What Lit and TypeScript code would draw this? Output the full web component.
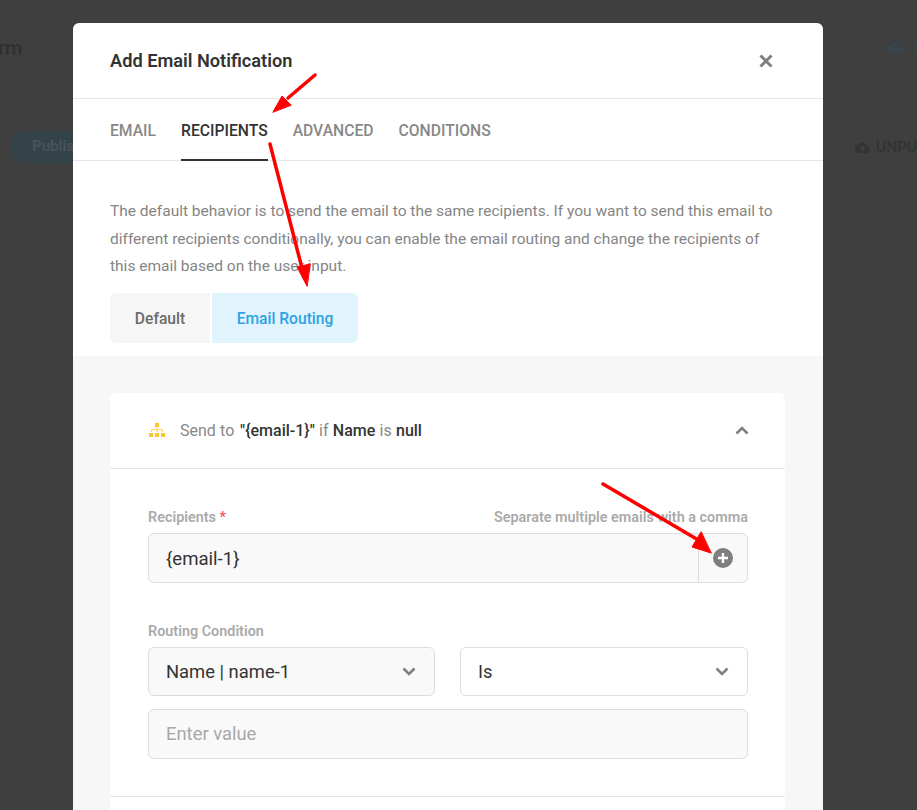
import { LitElement, html, css } from "lit";
import { customElement } from "lit/decorators.js";

const chevron = (up = false) => html`<svg class="chev" viewBox="0 0 14 9" width="14" height="9"><path d="${up ? "M1.5 7.5 7 2l5.5 5.5" : "M1.5 1.5 7 7l5.5-5.5"}" fill="none" stroke="currentColor" stroke-width="2.6"/></svg>`;
const cloud = html`<svg viewBox="0 0 16 12" width="15" height="11"><path fill="currentColor" d="M12.9 4.5A5 5 0 0 0 3.5 3.2 4.2 4.2 0 0 0 4 12h8.6a3.7 3.7 0 0 0 .3-7.5ZM9.5 7v2.5h-3V7H4.4L8 3.4 11.6 7Z"/></svg>`;

@customElement("app-root")
export class AppRoot extends LitElement {
  static styles = css`
    :host { display: block; position: relative; width: 917px; height: 810px; overflow: hidden; background: #3f3f3f; font-family: Roboto, "Liberation Sans", sans-serif; color: #333; }
    * { box-sizing: border-box; }
    .page { height: 810px; display: flex; flex-direction: column; color: #303030; }
    .top { height: 73px; border-bottom: 1px solid #414141; display: flex; justify-content: space-between; font-size: 20px; font-weight: 500; padding-top: 31px; }
    .brand { line-height: 34px; margin-left: -2px; }
    .save { width: 60px; flex: none; height: 32px; margin-right: -16px; border: 1px solid #414141; border-radius: 4px; color: #37454d; display: flex; align-items: center; gap: 11px; padding-left: 14px; font-size: 15px; overflow: hidden; }
    .save svg { flex: none; }
    .sub { flex: none; height: 36px; border-bottom: 1px solid #404040; }
    .bar { display: flex; justify-content: space-between; align-items: center; padding: 22px 0 0 10px; }
    .publish { width: 80px; height: 32px; border-radius: 16px; background: #34424a; color: #47525a; font-size: 15px; font-weight: 700; padding: 6px 0 0 22px; }
    .unpub { width: 62px; white-space: nowrap; font-size: 15.5px; font-weight: 500; display: flex; gap: 6px; align-items: center; color: #333; }
    .unpub svg { flex: none; }
    .modal { position: absolute; left: 73px; top: 23px; width: 750px; height: 787px; background: #fff; border-radius: 6px 6px 0 0; }
    .head { height: 76px; padding: 0 49px 0 37px; border-bottom: 1px solid #e6e6e6; display: flex; justify-content: space-between; align-items: center; }
    h2 { margin: 0; font-size: 18.2px; font-weight: 600; color: #333; }
    .close { display: block; color: #7f7f7f; }
    .tabs { height: 62px; padding: 0 37px; border-bottom: 1px solid #e6e6e6; display: flex; gap: 25px; align-items: stretch; }
    .tab { font-size: 15.7px; font-weight: 500; color: #888; display: flex; align-items: center; height: 62px; }
    .tab.on { color: #333; border-bottom: 2px solid #333; padding-top: 2px; }
    .intro { padding: 37px 37px 13px; }
    p { margin: 0 0 12px; font-size: 15.5px; line-height: 27.5px; color: #858585; }
    .seg { display: flex; width: max-content; height: 50px; font-size: 15.6px; font-weight: 500; }
    .seg div { display: flex; align-items: center; justify-content: center; padding-top: 2px; }
    .seg .a { width: 100px; background: #f6f6f6; color: #6b6b6b; border-radius: 6px 0 0 6px; margin-right: 2px; }
    .seg .b { width: 146px; background: #e1f4fe; color: #2ea3e3; border-radius: 0 6px 6px 0; }
    .gray { background: #f7f7f7; padding: 37px 38px 0 37px; height: 454px; }
    .card { background: #fff; border-radius: 6px 6px 0 0; height: 417px; }
    .chead { height: 76px; border-bottom: 1px solid #e6e6e6; padding: 0 36px 0 39px; display: flex; align-items: center; font-size: 16px; color: #888; }
    .chead b { font-weight: 500; color: #333; }
    .chead b.q { margin-left: 1.5px; }
    .chead svg.org { margin-right: 15px; }
    .chead .t { flex: 1; word-spacing: 0.3px; }
    .chead .chev { color: #7f7f7f; }
    .cbody { padding: 38px 37px 0 38px; height: 328px; border-bottom: 1px solid #e6e6e6; }
    .labels { display: flex; justify-content: space-between; font-size: 14.4px; font-weight: 600; color: #aaa; height: 26px; padding-top: 2px; line-height: 17px; }
    .labels i { color: #f05a5a; font-style: normal; }
    .field { height: 50px; border: 1px solid #ddd; border-radius: 6px; background: #f9f9f9; display: flex; align-items: center; font-size: 18.4px; color: #333; padding-left: 17px; }
    .field .v { flex: 1; font-size: 18.6px; padding-top: 2px; }
    .plus { width: 49px; height: 48px; border-left: 1px solid #ddd; display: flex; align-items: center; justify-content: center; }
    .lab2 { font-size: 14.4px; font-weight: 600; color: #aaa; margin-top: 40px; height: 24px; line-height: 17px; }
    .row { display: flex; gap: 25px; }
    .sel { width: 287px; flex: none; height: 49px; justify-content: space-between; padding-right: 18px; }
    .sel .chev { color: #7f7f7f; }
    .sel.w { background: #fff; flex: 1; }
    .ph { margin-top: 13px; color: #a8a8a8; height: 50px; }
    .arrows { position: absolute; left: 0; top: 0; pointer-events: none; }
  `;

  render() {
    return html`
      <div class="page">
        <div class="top"><span class="brand">rm</span><div class="save">${cloud}<span>Save</span></div></div>
        <div class="sub"></div>
        <div class="bar"><div class="publish">Publish</div><div class="unpub">${cloud}<span>UNPUBLISHED</span></div></div>
      </div>
      <div class="modal">
        <div class="head">
          <h2>Add Email Notification</h2>
          <svg class="close" viewBox="0 0 16 16" width="16" height="16"><path d="M2.5 2.5l11 11M13.5 2.5l-11 11" stroke="currentColor" stroke-width="3" fill="none"/></svg>
        </div>
        <div class="tabs">
          <div class="tab">EMAIL</div><div class="tab on">RECIPIENTS</div><div class="tab">ADVANCED</div><div class="tab">CONDITIONS</div>
        </div>
        <div class="intro">
          <p>The default behavior is to send the email to the same recipients. If you want to send this email to different recipients conditionally, you can enable the email routing and change the recipients of this email based on the user input.</p>
          <div class="seg"><div class="a">Default</div><div class="b">Email Routing</div></div>
        </div>
        <div class="gray">
          <div class="card">
            <div class="chead">
              <svg class="org" viewBox="0 0 16 14" width="16" height="14"><g fill="#fdc52f"><rect x="6" y="0" width="4" height="4"/><rect x="0" y="10" width="4" height="4"/><rect x="6" y="10" width="4" height="4"/><rect x="12" y="10" width="4" height="4"/><path d="M7.5 4h1v2H14v3h-1V7H8.5v2h-1V7H3v2H2V6h5.5Z" opacity=".75"/></g></svg>
              <span class="t">Send to <b class="q">"{email-1}"</b> if <b>Name</b> is <b>null</b></span>
              ${chevron(true)}
            </div>
            <div class="cbody">
              <div class="labels"><span>Recipients <i>*</i></span><span>Separate multiple emails with a comma</span></div>
              <div class="field"><span class="v">{email-1}</span>
                <div class="plus"><svg viewBox="0 0 20 20" width="20" height="20"><circle cx="10" cy="10" r="10" fill="#7f7f7f"/><path d="M10 5v10M5 10h10" stroke="#fff" stroke-width="2.4"/></svg></div>
              </div>
              <div class="lab2">Routing Condition</div>
              <div class="row">
                <div class="field sel"><span>Name | name-1</span>${chevron()}</div>
                <div class="field sel w"><span>Is</span>${chevron()}</div>
              </div>
              <div class="field ph">Enter value</div>
            </div>
          </div>
        </div>
      </div>
      <svg class="arrows" width="917" height="810" viewBox="0 0 917 810">
        <g fill="#f00" stroke="#f00" stroke-linecap="round">
          <path d="M315 75 288 98" stroke-width="3.5" fill="none"/>
          <path d="M273 112 282 96 291 105Z" stroke-width="1"/>
          <path d="M270 144 303 272" stroke-width="3.5" fill="none"/>
          <path d="M307 286 297 267 310 264Z" stroke-width="1"/>
          <path d="M603 484 700 541" stroke-width="3.5" fill="none"/>
          <path d="M711 553 692 547 701 532Z" stroke-width="1"/>
        </g>
      </svg>
    `;
  }
}
